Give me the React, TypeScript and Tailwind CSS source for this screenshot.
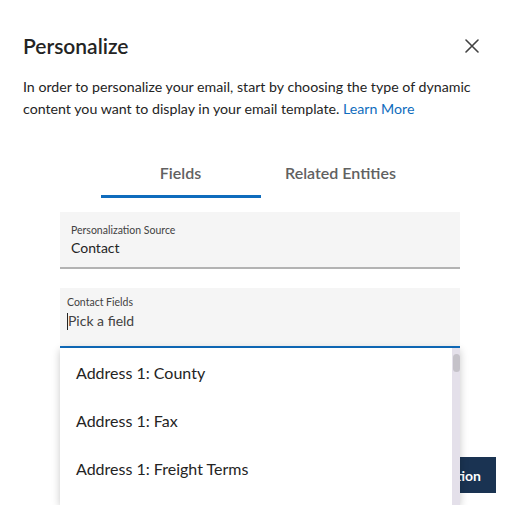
import React from "react";

export default function App() {
  const items = ["Address 1: County", "Address 1: Fax", "Address 1: Freight Terms"];
  return (
    <div
      className="relative w-[521px] h-[505px] overflow-hidden bg-white text-[#242424]"
      style={{ fontFamily: 'Lato, "Noto Sans", sans-serif' }}
    >
      <div className="flex items-center justify-between pl-[23px] pr-[42px] pt-[33px]">
        <h1 className="text-[21px] leading-[26px] font-semibold text-[#242424]">Personalize</h1>
        <svg width="14" height="14" viewBox="0 0 14 14" className="text-[#424242]">
          <path d="M1 1 L13 13 M13 1 L1 13" stroke="currentColor" strokeWidth="1.6" strokeLinecap="round" />
        </svg>
      </div>
      <p className="mt-[17px] px-[23px] text-[14.2px] leading-[22px] text-[#242424]">
        In order to personalize your email, start by choosing the type of dynamic content you want to display in your email template.{" "}
        <span className="text-[#0f6cbd]">Learn More</span>
      </p>
      <div className="mt-[40px] flex justify-center">
        <div className="flex">
          <div className="w-[160px] h-[38px] flex flex-col items-center justify-between">
            <span className="text-[16px] leading-[20px] font-semibold text-[#616161] pt-[3px]">Fields</span>
            <div className="w-full h-[3px] bg-[#0f6cbd]" />
          </div>
          <div className="w-[160px] h-[38px] flex flex-col items-center">
            <span className="text-[16px] leading-[20px] font-semibold text-[#616161] pt-[3px]">Related Entities</span>
          </div>
        </div>
      </div>
      <div className="mt-[14px] ml-[60px] w-[400px] flex flex-col gap-[19px]">
        <div className="h-[57px] bg-[#f5f5f5] border-b-2 border-[#b3b3b3] px-[11px] pt-[11px]">
          <div className="text-[10.5px] leading-[14px] text-[#424242]">Personalization Source</div>
          <div className="text-[14px] leading-[20px] text-[#242424] mt-[1px]">Contact</div>
        </div>
        <div className="relative h-[60px] bg-[#f5f5f5] border-b-2 border-[#0f6cbd] px-[7px] pt-[7px]">
          <div className="text-[10.5px] leading-[14px] text-[#424242]">Contact Fields</div>
          <div className="flex items-center mt-[2px]">
            <span className="w-px h-[17px] bg-[#242424]" />
            <span className="text-[14px] leading-[20px] text-[#424242]">Pick a field</span>
          </div>
        </div>
      </div>
      <div className="absolute left-[340px] top-[457px] h-[36px] w-[156px] bg-[#1a3352] flex items-center justify-end pr-[15px]">
        <span className="text-[14px] font-bold text-white">Add to selection</span>
      </div>
      <div className="absolute left-[60px] top-[348px] w-[400px] h-[157px] bg-white shadow-[0_2px_8px_rgba(0,0,0,0.22)] flex">
        <div className="flex-1 pt-[1px] overflow-hidden">
          {items.map((t) => (
            <div key={t} className="h-[48px] flex items-center pl-[16px] text-[16px] text-[#242424]">
              {t}
            </div>
          ))}
        </div>
        <div className="w-[8px] bg-[#e4e0ea] pt-[6px] flex justify-center">
          <div className="w-[7px] h-[18px] rounded-full bg-[#c5c2c9]" />
        </div>
      </div>
    </div>
  );
}
